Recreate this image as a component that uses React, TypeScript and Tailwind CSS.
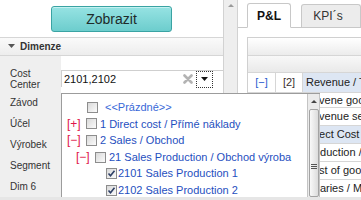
import React from "react"

const treeText = "text-[#1f4fc0]"

function Checkbox({ checked = false, className = "" }: { checked?: boolean; className?: string }) {
  return (
    <span className={`relative block w-[11px] h-[11px] shrink-0 border border-[#8d8d8d] bg-gradient-to-br from-[#d9d9d9] to-[#fbfbfb] ${className}`}>
      {checked && (
        <svg viewBox="0 0 11 11" className="absolute -left-px -top-px w-[11px] h-[11px]">
          <path d="M2.5 5.5 L4.5 7.8 L8.5 2.8" fill="none" stroke="#2e3f66" strokeWidth="1.6" />
        </svg>
      )}
    </span>
  )
}

function Toggle({ open }: { open: boolean }) {
  return <span className="block w-[15px] shrink-0 text-[12px] leading-none text-[#e0164a]">{open ? "[−]" : "[+]"}</span>
}

const rows = [
  { text: "Revene goods", h: "h-[15px]", pl: "pl-[2px]", blue: false },
  { text: "Revenue services", h: "h-[18px]", pl: "pl-[2px]", blue: false },
  { text: "Direct Cost", h: "h-[18px]", pl: "pl-[2px]", blue: true },
  { text: "Production / Výroba", h: "h-[18px]", pl: "pl-[0px]", blue: false },
  { text: "Cost of goods", h: "h-[18px]", pl: "pl-[2px]", blue: false },
  { text: "Salaries / Mzdy", h: "h-[18px]", pl: "pl-[1px]", blue: false },
]

export default function App() {
  return (
    <div className="relative w-[361px] h-[200px] overflow-hidden bg-white font-['Liberation_Sans',Arial,sans-serif] text-[11px] text-[#222]">
      <div className="flex h-[197px]">
        {/* left panel */}
        <div className="flex w-[238px] shrink-0">
          <div className="w-[223px] flex flex-col">
            <div className="h-[41px] flex justify-center pt-[6px] border-b border-[#d6d6d6]">
              <div className="w-[121px] h-[26px] rounded-[3px] border border-[#3aa3a3] bg-gradient-to-b from-[#96e3e3] to-[#6ccdcd] shadow-[inset_0_1px_0_#c4f1f1] flex items-center justify-center text-[14px] text-[#1e2b2b]">
                Zobrazit
              </div>
            </div>
            <div className="h-[20px] flex items-center pl-[8px] gap-[5px] border-b border-[#d6d6d6] bg-gradient-to-b from-[#fafafa] to-[#ededed] text-[10px] font-bold text-[#333]">
              <svg viewBox="0 0 7 4" className="w-[7px] h-[4px]"><path d="M0 0 H7 L3.5 4 Z" fill="#555" /></svg>
              Dimenze
            </div>
            <div className="flex flex-1">
              <div className="w-[61px] shrink-0 bg-[#efefef] text-[10px] text-[#333] pl-[10px]">
                <div className="h-[36px] pt-[12px] leading-[11px]">Cost<br />Center</div>
                <div className="h-[21px] flex items-center">Závod</div>
                <div className="h-[21px] flex items-center">Účel</div>
                <div className="h-[21px] flex items-center">Výrobek</div>
                <div className="h-[21px] flex items-center">Segment</div>
                <div className="h-[21px] flex items-center">Dim 6</div>
              </div>
              <div className="flex-1 pt-[14px]">
                <div className="h-[17px] flex items-center border-t border-l border-[#cfcfcf] pr-[10px]">
                  <span className="flex-1 pl-[2px] text-[#111]">2101,2102</span>
                  <svg viewBox="0 0 10 10" className="w-[10px] h-[10px] mr-[3px]">
                    <path d="M1.5 1.5 L8.5 8.5 M8.5 1.5 L1.5 8.5" stroke="#b3b3b3" strokeWidth="2.6" strokeLinecap="round" />
                  </svg>
                  <span className="w-[17px] h-[17px] border border-dotted border-[#333] flex items-center justify-center">
                    <svg viewBox="0 0 7 4" className="w-[7px] h-[4px]"><path d="M0 0 H7 L3.5 4 Z" fill="#111" /></svg>
                  </span>
                </div>
              </div>
            </div>
          </div>
          <div className="w-[15px] bg-[#eeeeee] border-l border-r border-[#d2d2d2] flex justify-center pt-[4px]">
            <svg viewBox="0 0 6 3" className="w-[6px] h-[3px]"><path d="M0 3 H6 L3 0 Z" fill="#9a9a9a" /></svg>
          </div>
        </div>

        {/* right panel */}
        <div className="flex-1 min-w-0 flex flex-col">
          <div className="h-[28px] flex items-end gap-[10px] pl-[9px] border-b border-[#c8c8c8] shrink-0">
            <div className="-mb-px w-[51px] h-[25px] rounded-t-[3px] border border-[#c8c8c8] border-b-white bg-white flex items-center justify-center font-bold text-[12px] text-[#111]">
              P&amp;L
            </div>
            <div className="w-[60px] h-[23px] shrink-0 rounded-t-[3px] border border-b-0 border-[#c8c8c8] bg-[#ececec] flex items-center justify-center pr-[6px] text-[12px] text-[#333]">
              KPI´s
            </div>
          </div>
          <div className="flex-1 pl-[9px] pt-[9px] overflow-hidden">
            <div className="w-[200px] border-l border-t border-[#d0d0d0]">
              <div className="h-[18px] border-b border-[#d6d6d6] bg-gradient-to-b from-[#ffffff] to-[#ececec]" />
              <div className="h-[17px] border-b border-[#d6d6d6] bg-gradient-to-b from-[#f8f8f8] to-[#e9e9e9]" />
              <div className="h-[20px] flex border-b border-[#d6d6d6]">
                <div className="w-[28px] border-r border-[#d6d6d6] flex items-center justify-center text-[#2b5bd0]">[−]</div>
                <div className="w-[27px] border-r border-[#d6d6d6] flex items-center justify-center text-[#3a3030]">[2]</div>
                <div className="flex-1 bg-[#dde6f3] flex items-center pl-[3px] whitespace-nowrap">Revenue / Tržby</div>
              </div>
              {rows.map((r) => (
                <div key={r.text} className={`${r.h} flex border-b border-[#d6d6d6]`}>
                  <div className="w-[28px] border-r border-[#d6d6d6]" />
                  <div className="w-[27px] border-r border-[#d6d6d6]" />
                  <div className={`flex-1 flex items-center ${r.pl} whitespace-nowrap ${r.blue ? "bg-[#dde6f3]" : ""}`}>{r.text}</div>
                </div>
              ))}
            </div>
          </div>
        </div>
      </div>
      <div className="h-[3px] bg-[#e6e6e6]" />

      {/* dropdown popup */}
      <div className="absolute z-10 left-[61px] top-[93px] w-[259px] h-[104px] bg-white border-l border-t border-[#9c9c9c] flex">
        <div className="flex-1 min-w-0 pt-[5px] whitespace-nowrap overflow-hidden">
          <div className="h-[16.6px] flex items-center pl-[25px]">
            <Checkbox />
            <span className="ml-[7px] text-[#3768d8]">&lt;&lt;Prázdné&gt;&gt;</span>
          </div>
          <div className="h-[16.6px] flex items-center pl-[5px]">
            <Toggle open={false} />
            <Checkbox className="ml-[4px]" />
            <span className={`ml-[3px] ${treeText}`}>1 Direct cost / Přímé náklady</span>
          </div>
          <div className="h-[16.6px] flex items-center pl-[5px]">
            <Toggle open />
            <Checkbox className="ml-[4px]" />
            <span className={`ml-[3px] ${treeText}`}>2 Sales / Obchod</span>
          </div>
          <div className="h-[16.6px] flex items-center pl-[14px]">
            <Toggle open />
            <Checkbox className="ml-[4px]" />
            <span className={`ml-[3px] ${treeText}`}>21 Sales Production / Obchod výroba</span>
          </div>
          <div className="h-[16.6px] flex items-center pl-[44px]">
            <Checkbox checked />
            <span className={`ml-[1px] ${treeText}`}>2101 Sales Production 1</span>
          </div>
          <div className="h-[16.6px] flex items-center pl-[44px]">
            <Checkbox checked />
            <span className={`ml-[1px] ${treeText}`}>2102 Sales Production 2</span>
          </div>
        </div>
        <div className="w-[13px] shrink-0 bg-[#ebebeb] border-l border-r border-[#c4c4c4] flex flex-col items-center">
          <div className="h-[15px] flex items-center justify-center">
            <svg viewBox="0 0 6 3" className="w-[6px] h-[3px]"><path d="M0 3 H6 L3 0 Z" fill="#444" /></svg>
          </div>
          <div className="w-[10px] flex-1 rounded-[2px] border border-[#a3a3a3] bg-gradient-to-r from-[#f9f9f9] to-[#dcdcdc] flex justify-center pt-[54px]">
            <svg viewBox="0 0 6 5" className="w-[6px] h-[5px]">
              <path d="M0 0.5 H6 M0 2.5 H6 M0 4.5 H6" stroke="#555" strokeWidth="1" />
            </svg>
          </div>
        </div>
      </div>
    </div>
  )
}
